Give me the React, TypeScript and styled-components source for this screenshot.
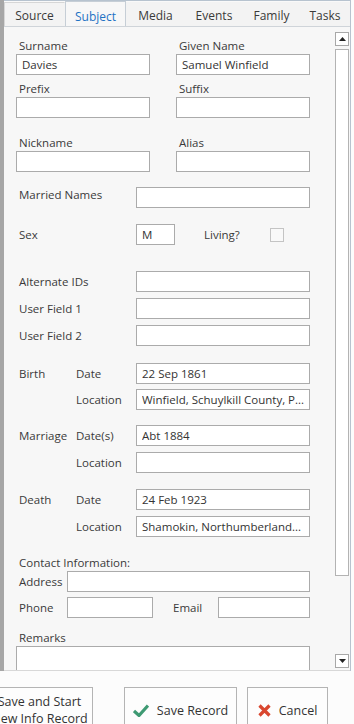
import React from 'react';
import styled, { createGlobalStyle } from 'styled-components';

const GlobalStyle = createGlobalStyle`
  html, body {
    margin: 0;
    padding: 0;
    background: #ffffff;
  }
  * {
    box-sizing: border-box;
  }
`;

const tabs = [
  { name: 'Source', width: 61 },
  { name: 'Subject', width: 61 },
  { name: 'Media', width: 59 },
  { name: 'Events', width: 58 },
  { name: 'Family', width: 57 },
  { name: 'Tasks', width: 50 },
];

const App: React.FC = () => {
  return (
    <Window>
      <GlobalStyle />
      <Main>
        <LeftStrip />
        <TabControl>
          <TabStrip>
            {tabs.map((t) => (
              <Tab key={t.name} $width={t.width} $active={t.name === 'Subject'}>{t.name}</Tab>
            ))}
          </TabStrip>
          <Panel>
            <Content>
              <PairRow>
                <Stacked>
                  <TopLabel>Surname</TopLabel>
                  <Input value="Davies" />
                </Stacked>
                <Stacked>
                  <TopLabel>Given Name</TopLabel>
                  <Input value="Samuel Winfield" />
                </Stacked>
              </PairRow>
              <PairRow $gap={4}>
                <Stacked>
                  <TopLabel>Prefix</TopLabel>
                  <Input />
                </Stacked>
                <Stacked>
                  <TopLabel>Suffix</TopLabel>
                  <Input />
                </Stacked>
              </PairRow>
              <PairRow $gap={15}>
                <Stacked>
                  <TopLabel>Nickname</TopLabel>
                  <Input />
                </Stacked>
                <Stacked>
                  <TopLabel>Alias</TopLabel>
                  <Input />
                </Stacked>
              </PairRow>

              <FieldRow $gap={15}>
                <Label $lift>Married Names</Label>
                <Input />
              </FieldRow>
              <SexRow>
                <Label>Sex</Label>
                <Input value="M" />
                <LivingLabel>Living?</LivingLabel>
                <CheckBox />
              </SexRow>

              <FieldRow $gap={26}>
                <Label>Alternate IDs</Label>
                <Input />
              </FieldRow>
              <FieldRow $gap={6}>
                <Label>User Field 1</Label>
                <Input />
              </FieldRow>
              <FieldRow $gap={6}>
                <Label>User Field 2</Label>
                <Input />
              </FieldRow>

              <EventGroup $gap={17} $rowGap={5}>
                <Label>Birth</Label>
                <SubLabel>Date</SubLabel>
                <Input value="22 Sep 1861" />
                <span />
                <SubLabel>Location</SubLabel>
                <Input value="Winfield, Schuylkill County, P..." />
              </EventGroup>
              <EventGroup $gap={15} $rowGap={6}>
                <Label>Marriage</Label>
                <SubLabel>Date(s)</SubLabel>
                <Input value="Abt 1884" />
                <span />
                <SubLabel>Location</SubLabel>
                <Input />
              </EventGroup>
              <EventGroup $gap={16} $rowGap={6}>
                <Label>Death</Label>
                <SubLabel>Date</SubLabel>
                <Input value="24 Feb 1923" />
                <span />
                <SubLabel>Location</SubLabel>
                <Input value="Shamokin, Northumberland..." />
              </EventGroup>

              <SectionLabel>Contact Information:</SectionLabel>
              <ContactGrid>
                <Label>Address</Label>
                <AddressInput />
                <Label>Phone</Label>
                <Input />
                <EmailLabel>Email</EmailLabel>
                <Input />
              </ContactGrid>
              <RemarksLabel>Remarks</RemarksLabel>
              <Remarks />
            </Content>
            <ScrollBar>
              <ScrollButton>
                <svg width="7" height="4" viewBox="0 0 7 4"><path d="M0 4 L3.5 0 L7 4 Z" fill="#222" /></svg>
              </ScrollButton>
              <Thumb />
              <ScrollButton>
                <svg width="7" height="4" viewBox="0 0 7 4"><path d="M0 0 L3.5 4 L7 0 Z" fill="#222" /></svg>
              </ScrollButton>
            </ScrollBar>
          </Panel>
        </TabControl>
      </Main>
      <Footer>
        <Button $width={107}>
          <span>Save and Start<br />New Info Record</span>
        </Button>
        <Button $width={113}>
          <svg width="16" height="13" viewBox="0 0 16 13">
            <path d="M1 7 L6 11.5 L15 1.5" stroke="#3f9a73" strokeWidth="3.2" fill="none" strokeLinejoin="miter" />
          </svg>
          <span>Save Record</span>
        </Button>
        <Button $width={81}>
          <svg width="13" height="13" viewBox="0 0 13 13">
            <path d="M1.5 1.5 L11.5 11.5 M11.5 1.5 L1.5 11.5" stroke="#d9472f" strokeWidth="3.2" fill="none" />
          </svg>
          <span>Cancel</span>
        </Button>
      </Footer>
    </Window>
  );
};

const font = `"Segoe UI", "Open Sans", "Noto Sans", sans-serif`;

const Window = styled.div`
  width: 354px;
  height: 724px;
  overflow: hidden;
  display: flex;
  flex-direction: column;
  font-family: ${font};
  font-size: 11.5px;
  color: #3a3a3a;
  background: #fcfcfc;
`;

const Main = styled.div`
  display: flex;
  height: 671px;
  flex-shrink: 0;
`;

const LeftStrip = styled.div`
  width: 4px;
  background: #a6a6a6;
`;

const TabControl = styled.div`
  width: 347px;
  display: flex;
  flex-direction: column;
  border-top: 1px solid #b7c3cf;
  border-right: 1px solid #b7c3cf;
  background: #f9f9f9;
`;

const TabStrip = styled.div`
  display: flex;
  align-items: flex-end;
  height: 26px;
  border-bottom: 1px solid #cfd4d9;
  overflow: hidden;
`;

const Tab = styled.div<{ $active?: boolean; $width: number }>`
  width: ${(p) => p.$width}px;
  flex-shrink: 0;
  height: ${(p) => (p.$active ? 26 : 24)}px;
  margin-bottom: ${(p) => (p.$active ? -1 : 0)}px;
  padding-top: ${(p) => (p.$active ? 4 : 2)}px;
  display: flex;
  align-items: center;
  justify-content: center;
  font-size: 12px;
  white-space: nowrap;
  color: ${(p) => (p.$active ? '#1f72c4' : '#3a3a3a')};
  background: ${(p) => (p.$active ? '#f7f7f7' : '#f3f3f3')};
  border: 1px solid ${(p) => (p.$active ? '#c6ced6' : 'transparent')};
  border-bottom: none;
  &:first-child {
    border-left: 1px solid #d6d6d6;
    border-top: 1px solid #d6d6d6;
  }
`;

const Panel = styled.div`
  flex: 1;
  display: flex;
  background: #f7f7f7;
  border-bottom: 1px solid #d8d8d8;
  overflow: hidden;
`;

const Content = styled.div`
  width: 326px;
  padding: 9px 0 0 12px;
  display: flex;
  flex-direction: column;
`;

const Label = styled.div<{ $lift?: boolean }>`
  padding-left: 3px;
  line-height: 16px;
  white-space: nowrap;
  margin-top: ${(p) => (p.$lift ? -5 : 0)}px;
`;

const TopLabel = styled(Label)`
  padding-top: 2px;
`;

const SubLabel = styled.div`
  line-height: 16px;
  white-space: nowrap;
`;

const Input = styled.input.attrs({ readOnly: true, type: 'text' })`
  height: 21px;
  width: 100%;
  min-width: 0;
  margin: 0;
  padding: 0 5px;
  border: 1px solid #ababab;
  background: #ffffff;
  font-family: ${font};
  font-size: 11.5px;
  color: #333333;
  outline: none;
`;

const PairRow = styled.div<{ $gap?: number }>`
  display: grid;
  grid-template-columns: 134px 134px;
  column-gap: 26px;
  margin-top: ${(p) => p.$gap ?? 0}px;
`;

const Stacked = styled.div`
  display: flex;
  flex-direction: column;
`;

const FieldRow = styled.div<{ $gap: number }>`
  display: grid;
  grid-template-columns: 120px 174px;
  align-items: center;
  margin-top: ${(p) => p.$gap}px;
`;

const SexRow = styled.div`
  display: grid;
  grid-template-columns: 120px 39px 95px 14px;
  align-items: center;
  margin-top: 16px;
`;

const LivingLabel = styled.div`
  padding-left: 29px;
  line-height: 16px;
`;

const CheckBox = styled.div`
  width: 14px;
  height: 14px;
  border: 1px solid #c4c4c4;
  background: #f9f9f9;
`;

const EventGroup = styled.div<{ $gap: number; $rowGap: number }>`
  display: grid;
  grid-template-columns: 60px 60px 174px;
  row-gap: ${(p) => p.$rowGap}px;
  align-items: center;
  margin-top: ${(p) => p.$gap}px;
`;

const SectionLabel = styled(Label)`
  margin-top: 18px;
`;

const ContactGrid = styled.div`
  display: grid;
  grid-template-columns: 51px 86px 65px 92px;
  row-gap: 5px;
  align-items: center;
  & > input:nth-child(2) {
    grid-column: 2 / span 3;
  }
`;

const AddressInput = styled(Input)``;

const EmailLabel = styled.div`
  padding-left: 20px;
  line-height: 16px;
`;

const RemarksLabel = styled(Label)`
  margin-top: 12px;
`;

const Remarks = styled.div`
  height: 60px;
  width: 294px;
  flex-shrink: 0;
  border: 1px solid #ababab;
  background: #ffffff;
`;

const ScrollBar = styled.div`
  width: 15px;
  margin-left: 5px;
  padding: 5px 0 2px;
  display: flex;
  flex-direction: column;
`;

const ScrollButton = styled.div`
  width: 14px;
  height: 14px;
  flex-shrink: 0;
  border: 1px solid #a8a8a8;
  background: #ffffff;
  display: flex;
  align-items: center;
  justify-content: center;
`;

const Thumb = styled.div`
  margin: 3px 0 78px;
  flex: 1;
  width: 14px;
  border: 1px solid #b3b3b3;
  background: #ffffff;
`;

const Footer = styled.div`
  flex: 1;
  display: flex;
  align-items: flex-start;
  padding-top: 16px;
  margin-left: -14px;
  gap: 10px;
  & > button:first-child {
    margin-right: 21px;
  }
`;

const Button = styled.button<{ $width: number }>`
  width: ${(p) => p.$width}px;
  height: 46px;
  flex-shrink: 0;
  display: flex;
  align-items: center;
  justify-content: center;
  gap: 8px;
  padding: 0;
  border: 1px solid #b4b4b4;
  background: #fdfdfd;
  font-family: ${font};
  font-size: 12.5px;
  line-height: 17px;
  color: #333333;
  text-align: center;
`;

export default App;
